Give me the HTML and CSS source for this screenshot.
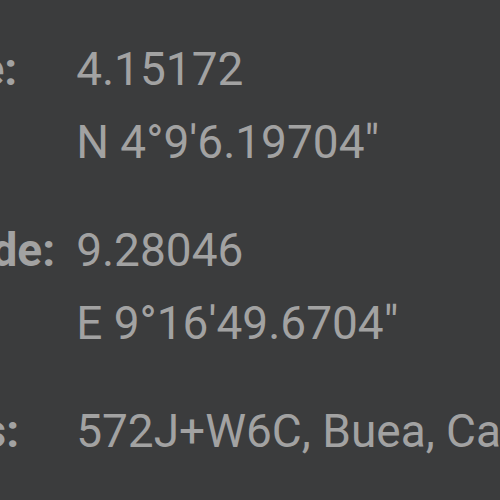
FILE: index.html
```html
<!DOCTYPE html>
<html lang="en">
<head>
    <meta charset="UTF-8">
    <meta name="viewport" content="width=device-width, initial-scale=1.0">
    <title>Location Details</title>
    <link rel="stylesheet" href="styles.css">
</head>
<body>
    <div class="details">
        <div class="label">Latitude:</div>
        <div class="values">
            <div>4.15172</div>
            <div>N 4°9'6.19704"</div>
        </div>
        <div class="label">Longitude:</div>
        <div class="values">
            <div>9.28046</div>
            <div>E 9°16'49.6704"</div>
        </div>
        <div class="label">Address:</div>
        <div class="values">
            <div>572J+W6C, Buea, Cameroon</div>
        </div>
    </div>
</body>
</html>
```

FILE: styles.css
```css
html, body {
    margin: 0;
    height: 100%;
    overflow: hidden;
}
body {
    background-color: #3b3c3d;
    color: #a2a2a2;
    font-family: Roboto, "Noto Sans", sans-serif;
    font-size: 46px;
    line-height: 73px;
}
.details {
    display: grid;
    grid-template-columns: auto 1fr;
    column-gap: 21px;
    row-gap: 35px;
    padding-top: 33px;
    margin-left: -165px;
    white-space: nowrap;
}
.label {
    font-weight: bold;
}
```
